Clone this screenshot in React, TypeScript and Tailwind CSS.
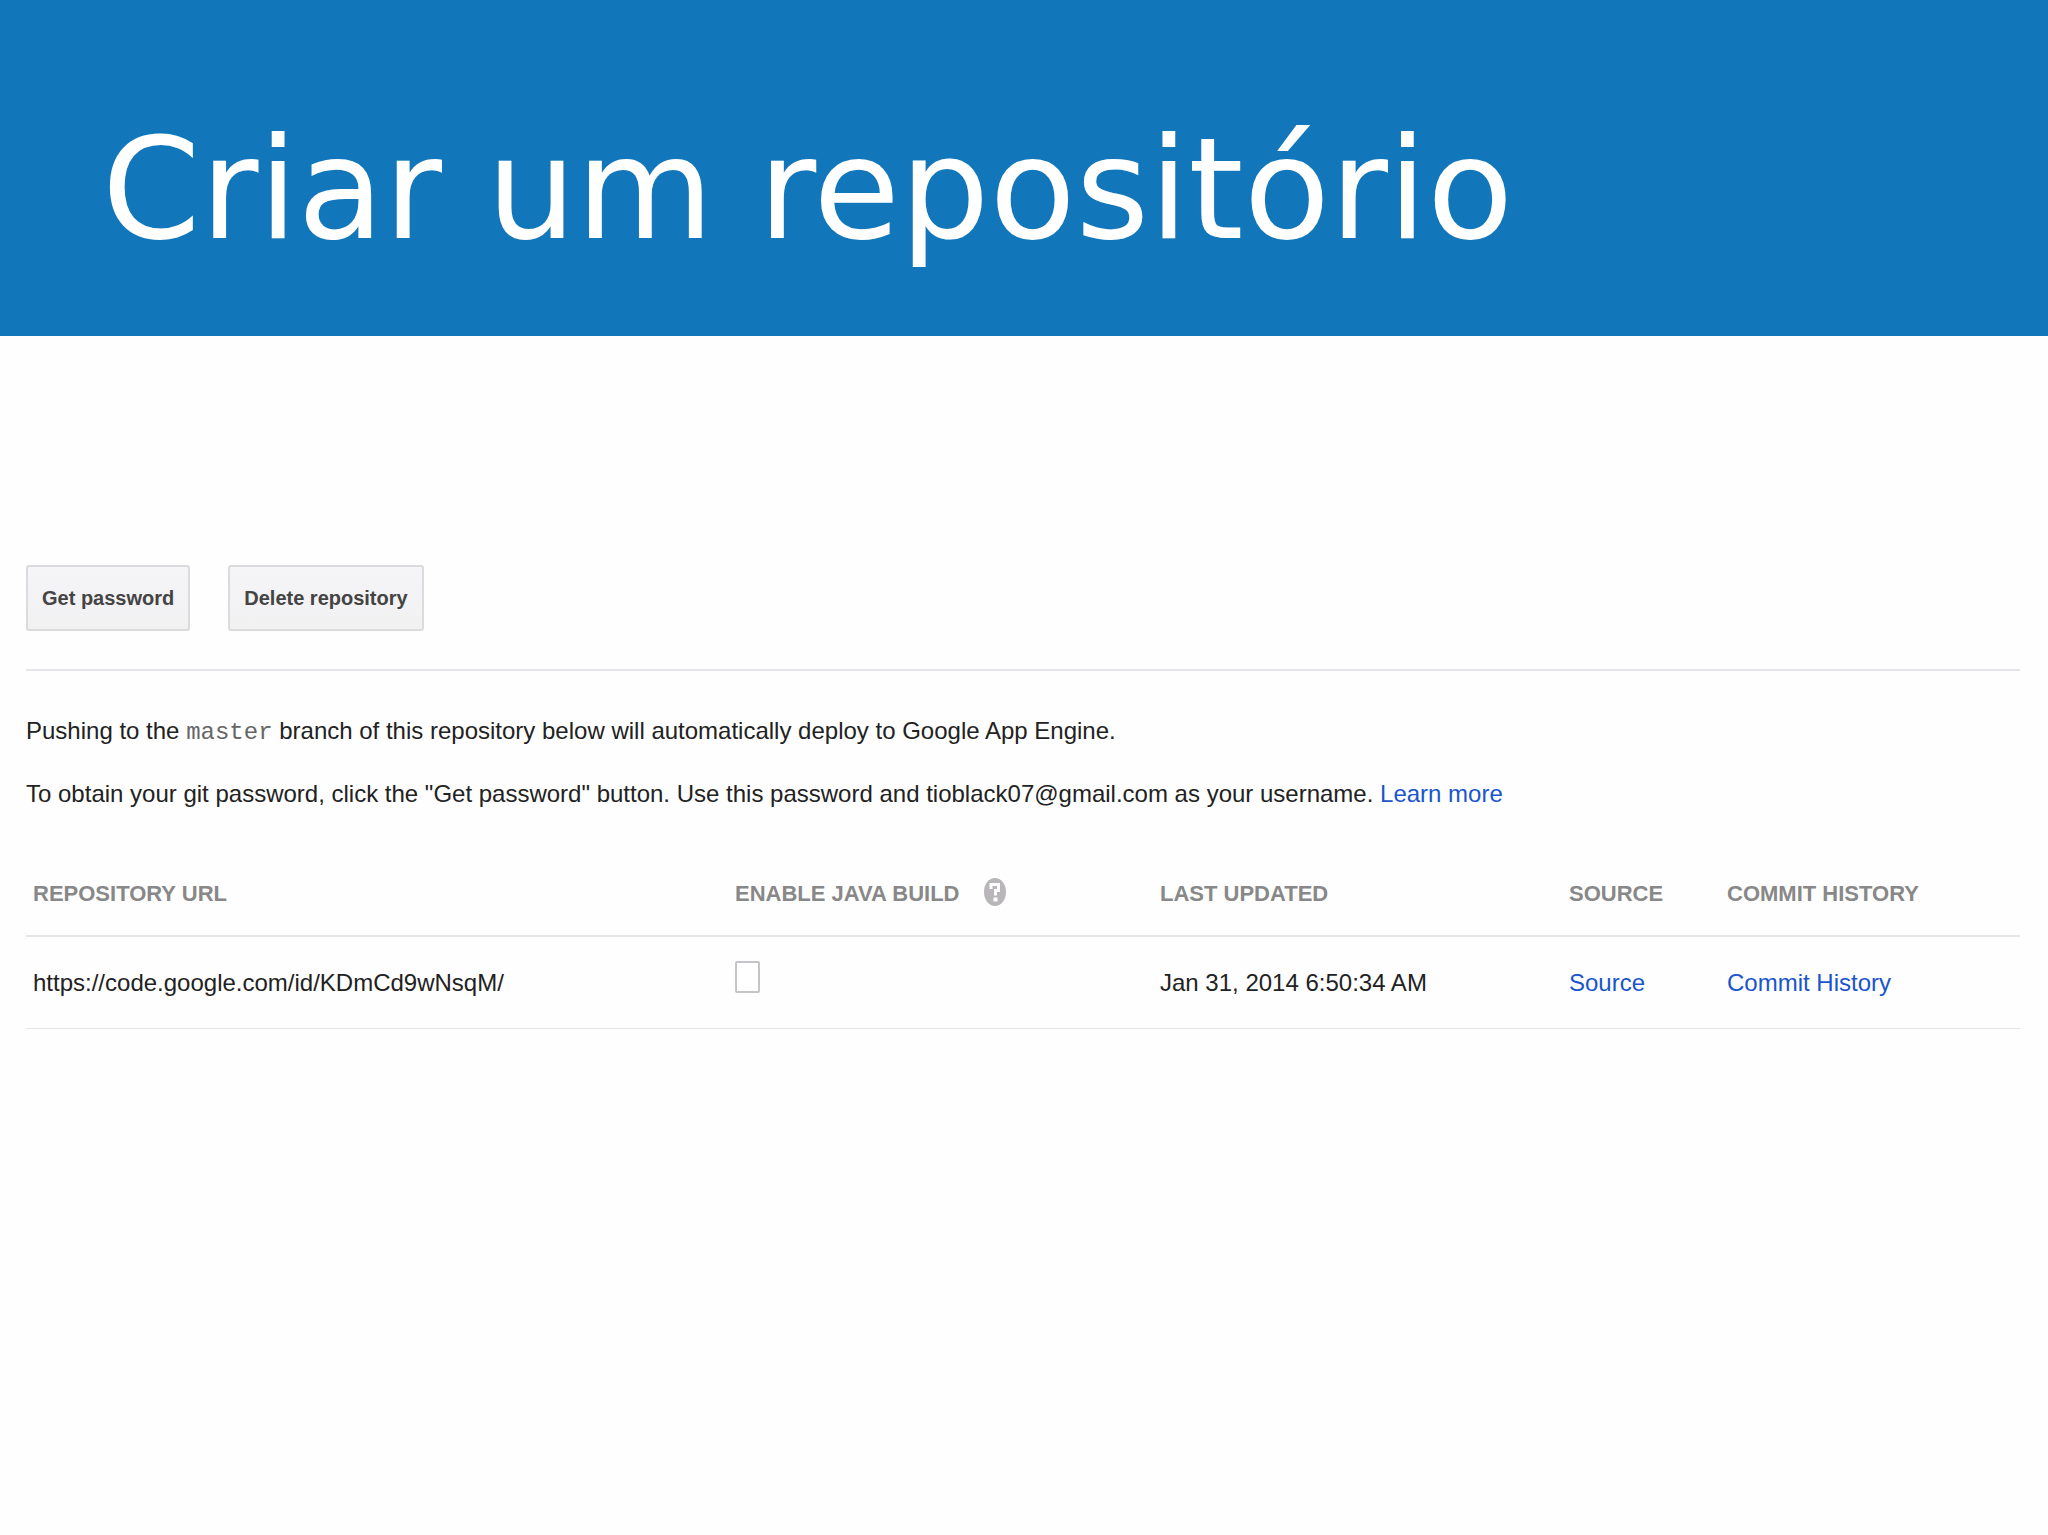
import { useState } from "react";

type Repository = {
  id: string;
  url: string;
  lastUpdated: string;
};

const repositories: Repository[] = [
  {
    id: "default",
    url: "https://code.google.com/id/KDmCd9wNsqM/",
    lastUpdated: "Jan 31, 2014 6:50:34 AM",
  },
];

function ActionButton({ children }: { children: string }) {
  return (
    <button
      type="button"
      className="h-[66px] px-[14px] rounded-[3px] border-2 border-[#dcdadd] bg-linear-to-b from-[#f5f4f7] to-[#f1f1f2] text-[20px] font-bold text-[#444444]"
    >
      {children}
    </button>
  );
}

function HelpIcon() {
  return (
    <svg width="22" height="28" viewBox="0 0 22 28" aria-hidden="true" className="mb-1">
      <ellipse cx="11" cy="14" rx="11" ry="14" fill="#b8b6b8" />
      <path
        d="M7 11V6.5H14.500V12.500H11.500V17.500"
        fill="none"
        stroke="#fff"
        strokeWidth="3"
      />
      <path d="M9.500 19.500h4v4h-4z" fill="#fff" />
    </svg>
  );
}

export default function App() {
  const [javaBuild, setJavaBuild] = useState<Record<string, boolean>>({});

  return (
    <div className="min-h-screen bg-[#fefefe] font-['Liberation_Sans',Arial,sans-serif] text-[24px] leading-[33px] text-[#222222]">
      <header className="bg-[#1176ba] px-[102px] pt-[107px] pb-[65px]">
        <h1 className="font-['DejaVu_Sans',sans-serif] text-[141px] leading-[164px] text-white">
          Criar um repositório
        </h1>
      </header>

      <main className="pl-[26px] pr-7 pt-[229px]">
        <div className="flex gap-[38px] pb-[38px] border-b-2 border-[#e6e4e9]">
          <ActionButton>Get password</ActionButton>
          <ActionButton>Delete repository</ActionButton>
        </div>

        <div className="flex flex-col gap-[30px] pt-[43px]">
          <p>
            Pushing to the{" "}
            <code className="font-['Liberation_Mono',monospace] text-[24px] leading-none text-[#666666]">
              master
            </code>{" "}
            branch of this repository below will automatically deploy to Google App Engine.
          </p>
          <p>
            To obtain your git password, click the "Get password" button. Use this password and
            tioblack07@gmail.com as your username.{" "}
            <a href="#learn-more" className="text-[#1a55cc]">
              Learn more
            </a>
          </p>
        </div>

        <table className="mt-[34px] w-full table-fixed border-collapse text-left">
          <thead>
            <tr className="h-[92px] border-b-2 border-[#e6e4e9] text-[22px] text-[#888888]">
              <th className="px-[7px] pt-2">REPOSITORY URL</th>
              <th className="w-[425px] px-[7px] pt-2">
                <span className="flex items-center gap-6">
                  ENABLE JAVA BUILD
                  <HelpIcon />
                </span>
              </th>
              <th className="w-[409px] px-[7px] pt-2">LAST UPDATED</th>
              <th className="w-[158px] px-[7px] pt-2">SOURCE</th>
              <th className="w-[300px] px-[7px] pt-2">COMMIT HISTORY</th>
            </tr>
          </thead>
          <tbody>
            {repositories.map((repo) => (
              <tr key={repo.id} className="h-[92px] border-b border-[#e6e4e9]">
                <td className="px-[7px]">{repo.url}</td>
                <td className="px-[7px] pt-6 align-top">
                  <input
                    type="checkbox"
                    aria-label="Enable Java build"
                    checked={!!javaBuild[repo.id]}
                    onChange={(e) =>
                      setJavaBuild({ ...javaBuild, [repo.id]: e.target.checked })
                    }
                    className="block h-8 w-[25px] appearance-none rounded-[2px] border-2 border-[#c6c4c8] bg-white checked:bg-[#1a55cc]"
                  />
                </td>
                <td className="px-[7px]">{repo.lastUpdated}</td>
                <td className="px-[7px]">
                  <a href="#source" className="text-[#1a55cc]">
                    Source
                  </a>
                </td>
                <td className="px-[7px]">
                  <a href="#commit-history" className="text-[#1a55cc]">
                    Commit History
                  </a>
                </td>
              </tr>
            ))}
          </tbody>
        </table>
      </main>
    </div>
  );
}
